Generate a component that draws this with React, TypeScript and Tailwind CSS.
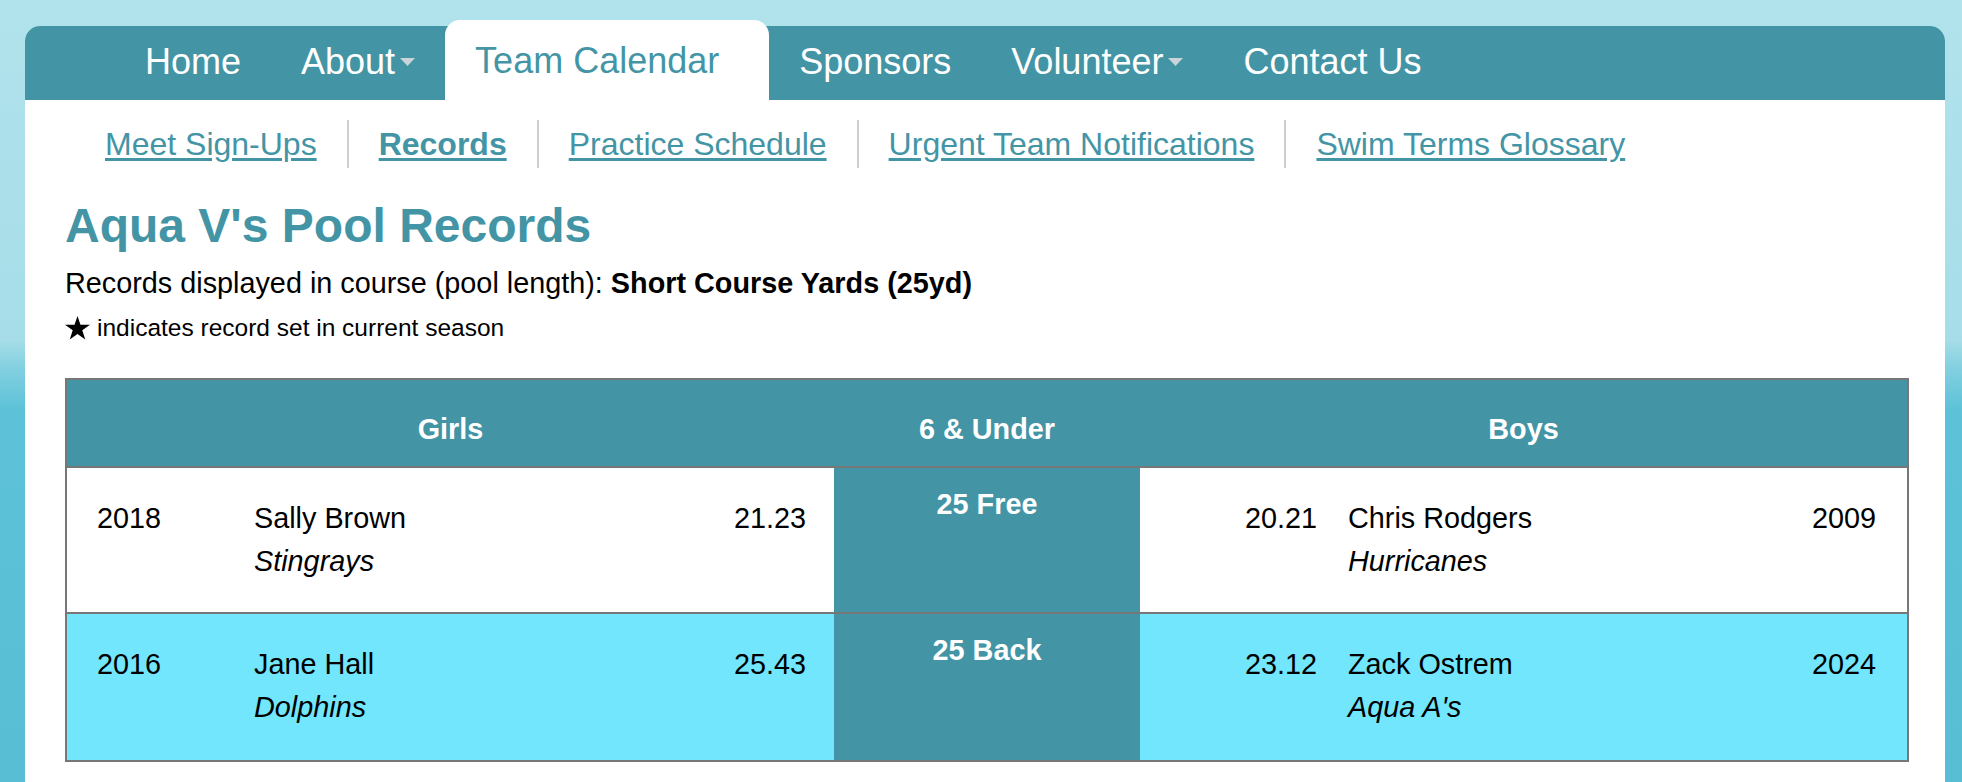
import type { ReactNode } from "react";

const mainNav = [
  { label: "Home" },
  { label: "About", menu: true },
  { label: "Team Calendar", active: true },
  { label: "Sponsors" },
  { label: "Volunteer", menu: true },
  { label: "Contact Us" },
];

const subNav = [
  { label: "Meet Sign-Ups" },
  { label: "Records", current: true },
  { label: "Practice Schedule" },
  { label: "Urgent Team Notifications" },
  { label: "Swim Terms Glossary" },
];

type Swimmer = { year: string; name: string; team: string; time: string };

const records: { event: string; girl: Swimmer; boy: Swimmer; rowBg: string }[] = [
  {
    event: "25 Free",
    girl: { year: "2018", name: "Sally Brown", team: "Stingrays", time: "21.23" },
    boy: { year: "2009", name: "Chris Rodgers", team: "Hurricanes", time: "20.21" },
    rowBg: "bg-white",
  },
  {
    event: "25 Back",
    girl: { year: "2016", name: "Jane Hall", team: "Dolphins", time: "25.43" },
    boy: { year: "2024", name: "Zack Ostrem", team: "Aqua A's", time: "23.12" },
    rowBg: "bg-[#72e6fd]",
  },
];

function Caret() {
  return (
    <svg width="15" height="8" viewBox="0 0 15 8" className="ml-[5px] mt-[2px] shrink-0">
      <path d="M0 0h15L7.5 8z" fill="#c9d5d8" />
    </svg>
  );
}

function Star() {
  return (
    <svg width="25" height="24" viewBox="0 0 24 23" className="inline-block shrink-0">
      <path d="M12 0l2.83 8.4H24l-7.4 5.3 2.83 8.9L12 17.2l-7.43 5.4 2.83-8.9L0 8.4h9.17z" fill="#000" />
    </svg>
  );
}

function NavBar() {
  return (
    <ul className="flex h-[74px] rounded-t-[15px] bg-[#4395a6] pl-[90px] text-[36px] leading-[41px] text-white">
      {mainNav.map((item) =>
        item.active ? (
          <li key={item.label} className="-mt-[6px] h-[80px] rounded-t-[15px] bg-white pl-[30px] pr-[50px] pt-[20px] text-[#4395a6]">
            {item.label}
          </li>
        ) : (
          <li key={item.label} className="flex h-[74px] items-center px-[30px] pb-[4px]">
            {item.label}
            {item.menu && <Caret />}
          </li>
        ),
      )}
    </ul>
  );
}

function SubNav() {
  return (
    <ul className="mt-[20px] flex pl-[10px] text-[32px] leading-[37px] text-[#4395a6]">
      {subNav.map((item, i) => (
        <li
          key={item.label}
          className={`flex h-[48px] items-center px-[30px] ${i > 0 ? "border-l-2 border-[#cfcfcf]" : ""}`}
        >
          <a href="#" className={`underline underline-offset-[3px] ${item.current ? "font-bold" : ""}`}>
            {item.label}
          </a>
        </li>
      ))}
    </ul>
  );
}

function NameBlock({ s }: { s: Swimmer }) {
  return (
    <div>
      <div>{s.name}</div>
      <div className="italic">{s.team}</div>
    </div>
  );
}

function Cell({ children, className = "" }: { children: ReactNode; className?: string }) {
  return <div className={`py-[29px] text-[28.8px] leading-[43px] ${className}`}>{children}</div>;
}

function RecordsTable() {
  return (
    <div className="mt-[36px] w-[1844px] border-2 border-[#777777] text-black">
      <div className="grid h-[88px] grid-cols-[767px_306px_767px] border-b-2 border-[#777777] bg-[#4395a6] pt-[33px] text-center text-[28.8px] font-bold leading-[33px] text-white">
        <div>Girls</div>
        <div>6 &amp; Under</div>
        <div>Boys</div>
      </div>
      {records.map((r, i) => (
        <div
          key={r.event}
          className={`grid h-[146px] grid-cols-[767px_306px_767px] ${r.rowBg} ${i < records.length - 1 ? "border-b-2 border-[#777777]" : "h-[144px]"}`}
        >
          <Cell className="grid grid-cols-[157px_1fr_auto] pl-[30px] pr-[28px]">
            <div>{r.girl.year}</div>
            <NameBlock s={r.girl} />
            <div className="text-right">{r.girl.time}</div>
          </Cell>
          <div className="bg-[#4395a6] pt-[20px] text-center text-[28.8px] font-bold leading-[33px] text-white">
            {r.event}
          </div>
          <Cell className="grid grid-cols-[177px_1fr_auto] gap-x-[31px] pr-[31px]">
            <div className="text-right">{r.boy.time}</div>
            <NameBlock s={r.boy} />
            <div className="text-right">{r.boy.year}</div>
          </Cell>
        </div>
      ))}
    </div>
  );
}

export default function App() {
  return (
    <div className="min-h-[782px] w-full overflow-hidden bg-[linear-gradient(180deg,#b1e3ec_0px,#a6dde8_340px,#80cfe0_370px,#5dc2d7_410px,#57bed4_782px)] pt-[26px] font-['Liberation_Sans',Arial,sans-serif]">
      <div className="ml-[25px] min-h-[756px] w-[1920px] rounded-t-[15px] bg-white">
        <NavBar />
        <div className="px-[40px]">
          <SubNav />
          <h1 className="mt-[30px] text-[48px] font-bold leading-[55px] text-[#4395a6]">Aqua V's Pool Records</h1>
          <p className="mt-[14px] text-[28.8px] leading-[33px] text-black">
            Records displayed in course (pool length): <b>Short Course Yards (25yd)</b>
          </p>
          <p className="mt-[14px] flex items-center gap-[7px] text-[24.5px] leading-[28px] text-black">
            <Star />
            <span>indicates record set in current season</span>
          </p>
          <RecordsTable />
        </div>
      </div>
    </div>
  );
}
